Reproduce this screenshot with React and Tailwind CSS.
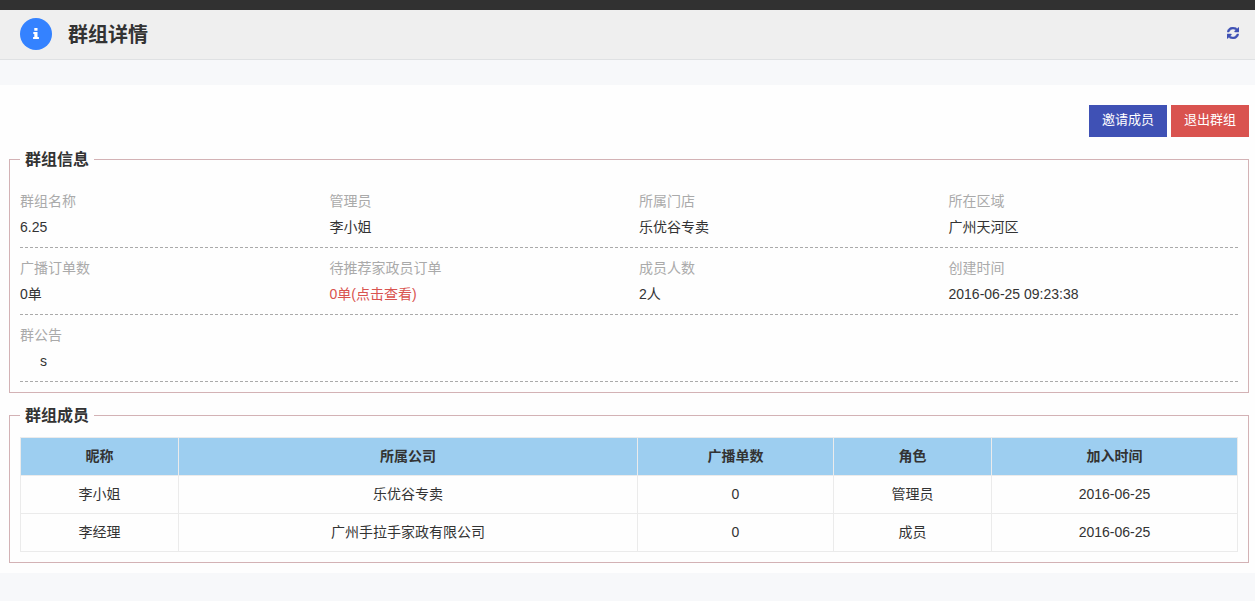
import React, { useState } from 'react';

const group = {
  name: '6.25',
  manager: '李小姐',
  store: '乐优谷专卖',
  area: '广州天河区',
  broadcastOrders: 0,
  pendingOrders: 0,
  memberCount: 2,
  createdAt: '2016-06-25 09:23:38',
  notice: 's',
};

const initialMembers = [
  { nickname: '李小姐', company: '乐优谷专卖', orders: 0, role: '管理员', joined: '2016-06-25' },
  { nickname: '李经理', company: '广州手拉手家政有限公司', orders: 0, role: '成员', joined: '2016-06-25' },
];

const InfoIcon = () => (
  <svg className="h-3 w-[6px]" viewBox="0 0 6 12" fill="currentColor" aria-hidden="true">
    <path d="M1.3 0h3.2v2.7H1.3zM.3 4h4.2v5h1.1q.4 0 .4.4v1.2q0 .4-.4.4H.4q-.4 0-.4-.4V9.400q0-.4.4-.4h.9V6h-1z" />
  </svg>
);

const RefreshIcon = () => (
  <svg className="h-3 w-3" viewBox="0 128 1536 1536" fill="currentColor" stroke="currentColor" strokeWidth="60" aria-hidden="true">
    <path d="M1511 1056q0 5-1 7-64 268-268 434.5t-478 166.5q-146 0-282.5-55t-243.5-157l-129 129q-19 19-45 19t-45-19-19-45v-448q0-26 19-45t45-19h448q26 0 45 19t19 45-19 45l-137 137q71 66 161 102t187 36q134 0 250-65t186-179q11-17 53-117 8-23 30-23h192q13 0 22.5 9.5t9.5 22.5zm25-800v448q0 26-19 45t-45 19h-448q-26 0-45-19t-19-45 19-45l138-138q-148-137-349-137-134 0-250 65t-186 179q-11 17-53 117-8 23-30 23h-199q-13 0-22.5-9.5t-9.5-22.5v-7q65-268 270-434.5t480-166.5q146 0 284 55.5t245 156.5l130-129q19-19 45-19t45 19 19 45z" />
  </svg>
);

const Panel = ({ title, children }) => (
  <fieldset className="min-w-0 border border-[#d3b2b5] p-[10px]">
    <legend className="px-[5px] text-base leading-[23px] font-bold">{title}</legend>
    {children}
  </fieldset>
);

const InfoRow = ({ children }) => (
  <dl className="grid grid-cols-4 gap-5 border-b border-dashed border-[#aaa] py-[7px] leading-[26px]">
    {children}
  </dl>
);

const Field = ({ label, children }) => (
  <div>
    <dt className="text-[#aaa]">{label}</dt>
    <dd>{children}</dd>
  </div>
);

const GroupDetail = () => {
  const [members, setMembers] = useState(initialMembers);

  const handleRefresh = () => {
    setMembers([...initialMembers]);
  };

  return (
    <div className="min-h-screen bg-[#f7f8fa] font-['Liberation_Sans','Noto_Sans_CJK_SC',sans-serif] text-sm text-[#333]">
      <div className="h-[10px] bg-[#313131]" />

      {/* Page header */}
      <header className="flex h-[50px] items-center gap-4 border-b border-[#dfe1e3] bg-[#efefef] pb-px pl-5 pr-4">
        <span className="flex h-8 w-8 items-center justify-center rounded-full bg-[#3482ff] text-white">
          <InfoIcon />
        </span>
        <h1 className="flex-1 pt-px text-xl font-bold">群组详情</h1>
        <button type="button" onClick={handleRefresh} aria-label="刷新" className="cursor-pointer pb-[2px] text-[#3f51b5]">
          <RefreshIcon />
        </button>
      </header>

      <main className="mt-[25px] flex flex-col gap-[11px] bg-[#fefefe] pt-5 pr-[6px] pb-[10px] pl-[9px]">
        <div className="flex justify-end gap-1 text-[13px] text-white">
          <button type="button" className="h-8 cursor-pointer bg-[#3f51b5] px-[13px] pb-[2px]">
            邀请成员
          </button>
          <button type="button" className="h-8 cursor-pointer bg-[#d9534f] px-[13px] pb-[2px]">
            退出群组
          </button>
        </div>

        <Panel title="群组信息">
          <InfoRow>
            <Field label="群组名称">{group.name}</Field>
            <Field label="管理员">{group.manager}</Field>
            <Field label="所属门店">{group.store}</Field>
            <Field label="所在区域">{group.area}</Field>
          </InfoRow>
          <InfoRow>
            <Field label="广播订单数">{group.broadcastOrders}单</Field>
            <Field label="待推荐家政员订单">
              <a href="#orders" className="text-[#d9534f]">
                {group.pendingOrders}单(点击查看)
              </a>
            </Field>
            <Field label="成员人数">{group.memberCount}人</Field>
            <Field label="创建时间">{group.createdAt}</Field>
          </InfoRow>
          <InfoRow>
            <Field label="群公告">
              <p className="pl-5">{group.notice}</p>
            </Field>
          </InfoRow>
        </Panel>

        <Panel title="群组成员">
          <table className="w-full table-fixed border-collapse text-center [&_td]:border [&_td]:border-[#ebebeb] [&_td]:pb-[2px] [&_th]:border [&_th]:border-[#ebebeb] [&_th]:pb-[2px]">
            <thead>
              <tr className="h-[38px] bg-[#9dcef0]">
                <th className="w-[158px]">昵称</th>
                <th>所属公司</th>
                <th className="w-[196px]">广播单数</th>
                <th className="w-[158px]">角色</th>
                <th className="w-[246px]">加入时间</th>
              </tr>
            </thead>
            <tbody>
              {members.map((m) => (
                <tr key={m.nickname} className="h-[38px]">
                  <td>{m.nickname}</td>
                  <td>{m.company}</td>
                  <td>{m.orders}</td>
                  <td>{m.role}</td>
                  <td>{m.joined}</td>
                </tr>
              ))}
            </tbody>
          </table>
        </Panel>
      </main>
    </div>
  );
};

export default GroupDetail;
